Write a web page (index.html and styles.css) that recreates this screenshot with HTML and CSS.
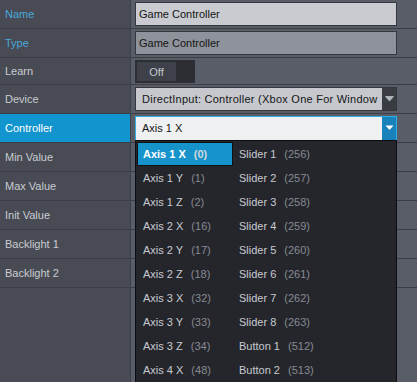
FILE: index.html
```html
<!DOCTYPE html>
<html lang="en">
<head>
    <meta charset="UTF-8">
    <title>Controller properties</title>
    <link rel="stylesheet" href="styles.css">
</head>
<body>
    <div class="sheet">
        <div class="row">
            <div class="label key">Name</div>
            <div class="value"><div class="field">Game Controller</div></div>
        </div>
        <div class="row">
            <div class="label key">Type</div>
            <div class="value"><div class="field locked">Game Controller</div></div>
        </div>
        <div class="row short">
            <div class="label">Learn</div>
            <div class="value">
                <div class="toggle"><span class="toggle-off">Off</span><span class="toggle-knob"></span></div>
            </div>
        </div>
        <div class="row">
            <div class="label">Device</div>
            <div class="value">
                <div class="select">
                    <span class="select-text wide">DirectInput: Controller (Xbox One For Window</span>
                    <span class="select-arrow"><svg width="9" height="6" viewBox="0 0 9 6"><path d="M0.5 0.5h8l-4 4.5z" fill="#b3b7bf" stroke="#d0d3d8" stroke-width="0.6"/></svg></span>
                </div>
            </div>
        </div>
        <div class="row active">
            <div class="label">Controller</div>
            <div class="value">
                <div class="select open">
                    <span class="select-text">Axis 1 X</span>
                    <span class="select-arrow"><svg width="9" height="6" viewBox="0 0 9 6"><path d="M0.5 0.5h8l-4 4.5z" fill="#ffffff"/></svg></span>
                </div>

                <!-- open list -->
                <div class="dropdown">
                    <div class="item selected">Axis 1 X<span class="num">(0)</span></div>
                    <div class="item">Axis 1 Y<span class="num">(1)</span></div>
                    <div class="item">Axis 1 Z<span class="num">(2)</span></div>
                    <div class="item">Axis 2 X<span class="num">(16)</span></div>
                    <div class="item">Axis 2 Y<span class="num">(17)</span></div>
                    <div class="item">Axis 2 Z<span class="num">(18)</span></div>
                    <div class="item">Axis 3 X<span class="num">(32)</span></div>
                    <div class="item">Axis 3 Y<span class="num">(33)</span></div>
                    <div class="item">Axis 3 Z<span class="num">(34)</span></div>
                    <div class="item">Axis 4 X<span class="num">(48)</span></div>
                    <div class="item">Slider 1<span class="num">(256)</span></div>
                    <div class="item">Slider 2<span class="num">(257)</span></div>
                    <div class="item">Slider 3<span class="num">(258)</span></div>
                    <div class="item">Slider 4<span class="num">(259)</span></div>
                    <div class="item">Slider 5<span class="num">(260)</span></div>
                    <div class="item">Slider 6<span class="num">(261)</span></div>
                    <div class="item">Slider 7<span class="num">(262)</span></div>
                    <div class="item">Slider 8<span class="num">(263)</span></div>
                    <div class="item">Button 1<span class="num">(512)</span></div>
                    <div class="item">Button 2<span class="num">(513)</span></div>
                </div>
            </div>
        </div>
        <div class="row">
            <div class="label">Min Value</div>
            <div class="value"></div>
        </div>
        <div class="row">
            <div class="label">Max Value</div>
            <div class="value"></div>
        </div>
        <div class="row">
            <div class="label">Init Value</div>
            <div class="value"></div>
        </div>
        <div class="row">
            <div class="label">Backlight 1</div>
            <div class="value"></div>
        </div>
        <div class="row">
            <div class="label">Backlight 2</div>
            <div class="value"></div>
        </div>
    </div>
</body>
</html>
```

FILE: styles.css
```css
body {
    margin: 0;
    font-family: "Liberation Sans", Arial, sans-serif;
    font-size: 11px;
    overflow: hidden;
}

.sheet {
    height: 382px;
    background: linear-gradient(to right, #484b54 0, #484b54 130px, #3d4047 130px, #3d4047 131px, #595d67 131px);
}

.row {
    display: grid;
    grid-template-columns: 131px 1fr;
    height: 28px;
    border-bottom: 1px solid #3b3e45;
}

.row.short {
    height: 26px;
}

.label {
    display: flex;
    align-items: center;
    padding-left: 5px;
    color: #c9ccd2;
    border-right: 1px solid #3d4047;
}

.label.key {
    color: #4aa9dd;
}

.row.active .label {
    background-color: #1294cf;
    color: #ffffff;
}

.value {
    position: relative;
    display: flex;
    align-items: center;
    padding-left: 4px;
}

.field {
    display: flex;
    align-items: center;
    box-sizing: border-box;
    width: 262px;
    height: 24px;
    padding-left: 3px;
    border: 1px solid #35373d;
    background-color: #c9cbd0;
    color: #151515;
}

.field.locked {
    background-color: #8e929b;
}

.toggle {
    display: flex;
    box-sizing: border-box;
    width: 60px;
    height: 23px;
    margin-top: 1px;
    border: 2px solid #2c2e34;
    background-color: #2b2d33;
}

.toggle-off {
    display: flex;
    align-items: center;
    justify-content: center;
    width: 39px;
    background-color: #3e414a;
    color: #c4c8d0;
}

.select {
    display: flex;
    align-items: stretch;
    box-sizing: border-box;
    width: 262px;
    height: 24px;
    border: 1px solid #35373d;
    background-color: #c6c8cd;
    color: #151515;
}

.select-text {
    flex: 1;
    display: flex;
    align-items: center;
    padding-left: 6px;
    white-space: nowrap;
    overflow: hidden;
}

.select-text.wide {
    letter-spacing: 0.25px;
}

.select-arrow {
    display: flex;
    align-items: center;
    justify-content: center;
    width: 14px;
    background-color: #393c43;
}

.select.open {
    height: 25px;
    border-color: #30aee6;
    background-color: #eff0f2;
}

.select.open .select-arrow {
    background-color: #1a82bb;
}

.dropdown {
    position: absolute;
    left: 4px;
    top: 26px;
    width: 262px;
    height: 260px;
    box-sizing: border-box;
    padding: 1px;
    border: 1px solid #0c0d10;
    background-color: #25262c;
    display: grid;
    grid-template-columns: 96px 96px;
    grid-template-rows: repeat(10, 24px);
    grid-auto-flow: column;
    z-index: 2;
}

.item {
    display: flex;
    align-items: center;
    padding-left: 6px;
    color: #c7cad0;
    white-space: nowrap;
}

.num {
    margin-left: 8px;
    color: #868a92;
}

.item.selected {
    padding-left: 5px;
    border: 1px solid #101216;
    background-color: #1793cb;
    color: #ffffff;
    font-weight: bold;
}

.item.selected .num {
    color: #d2d8de;
}
```
